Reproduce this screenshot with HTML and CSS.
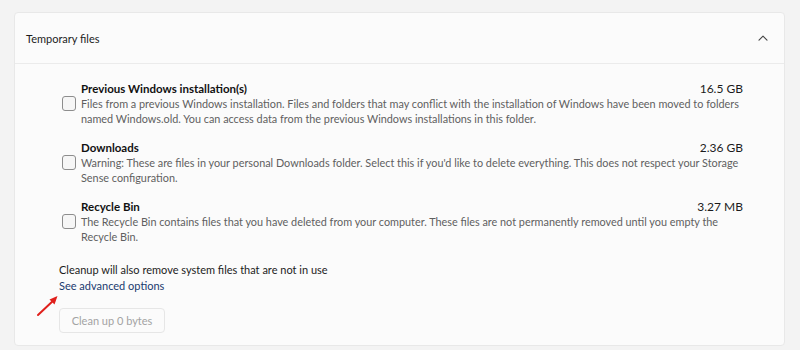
FILE: index.html
```html
<!DOCTYPE html>
<html>
<head>
<meta charset="utf-8">
<link rel="stylesheet" href="styles.css">
</head>
<body>
<div class="page">
  <section class="card">
    <header class="card-head">
      <span class="head-title">Temporary files</span>
      <svg class="chevron" width="10" height="6" viewBox="0 0 10 6"><path d="M1 5.2 L5 1.2 L9 5.2" fill="none" stroke="#444" stroke-width="1.1" stroke-linecap="round" stroke-linejoin="round"/></svg>
    </header>
    <div class="card-body">
      <div class="item">
        <span class="item-title">Previous Windows installation(s)</span>
        <span class="item-size">16.5 GB</span>
        <span class="checkbox"></span>
        <p class="item-desc">Files from a previous Windows installation. Files and folders that may conflict with the installation of Windows have been moved to folders named Windows.old. You can access data from the previous Windows installations in this folder.</p>
      </div>
      <div class="item">
        <span class="item-title">Downloads</span>
        <span class="item-size">2.36 GB</span>
        <span class="checkbox"></span>
        <p class="item-desc">Warning: These are files in your personal Downloads folder. Select this if you'd like to delete everything. This does not respect your Storage Sense configuration.</p>
      </div>
      <div class="item">
        <span class="item-title">Recycle Bin</span>
        <span class="item-size">3.27 MB</span>
        <span class="checkbox"></span>
        <p class="item-desc">The Recycle Bin contains files that you have deleted from your computer. These files are not permanently removed until you empty the Recycle Bin.</p>
      </div>
      <div class="footer">
        <p class="note">Cleanup will also remove system files that are not in use</p>
        <a class="link">See advanced options</a>
        <svg class="arrow" width="26" height="24" viewBox="0 0 26 24"><path d="M3 21 L20 5" stroke="#e0201c" stroke-width="2" stroke-linecap="round"/><path d="M22.5 2 L14.5 5.5 L19.5 10.5 Z" fill="#e0201c"/></svg>
        <button class="btn" disabled>Clean up 0 bytes</button>
      </div>
    </div>
  </section>
</div>
</body>
</html>
```
FILE: styles.css
```css
html, body {
  margin: 0;
  padding: 0;
  background: #f3f3f3;
  font-family: "Lato", "Noto Sans", sans-serif;
  font-size: 11px;
  color: #1b1b1b;
}
.page {
  padding: 12px 15px 0 14px;
}
.card {
  background: #fbfbfb;
  border: 1px solid #e8e8e8;
  border-radius: 4px;
  height: 334px;
  box-sizing: border-box;
}
.card-head {
  height: 50px;
  display: flex;
  align-items: center;
  justify-content: space-between;
  padding: 0 16px 0 11px;
  border-bottom: 1px solid #ebebeb;
}
.head-title {
  font-size: 11px;
  color: #1b1b1b;
}
.chevron {
  display: block;
}
.card-body {
  padding: 17px 41px 0 47px;
}
.item {
  display: grid;
  grid-template-columns: 14px 1fr auto;
  column-gap: 5px;
  line-height: 15px;
  margin-bottom: 14px;
}
.item-title {
  grid-column: 2;
  grid-row: 1;
  font-weight: 700;
  font-size: 11.5px;
  color: #111;
}
.item-size {
  grid-column: 3;
  grid-row: 1;
  text-align: right;
  font-size: 12px;
  color: #1b1b1b;
}
.checkbox {
  grid-column: 1;
  grid-row: 2;
  width: 14px;
  height: 15px;
  box-sizing: border-box;
  border: 1px solid #8d8d8d;
  border-radius: 3px;
  background: #f6f6f6;
}
.item-desc {
  grid-column: 2 / 4;
  grid-row: 2;
  margin: 0;
  font-size: 10.85px;
  color: #5f5f5f;
}
.footer {
  position: relative;
  margin-left: -3px;
  padding-top: 4px;
  line-height: 16px;
}
.note {
  margin: 0;
  color: #1b1b1b;
}
.link {
  display: inline-block;
  color: #1a3a6e;
  text-decoration: none;
}
.arrow {
  position: absolute;
  left: -24px;
  top: 36px;
}
.btn {
  display: block;
  margin-top: 14px;
  width: 106px;
  height: 25px;
  border: 1px solid #e6e6e6;
  border-radius: 4px;
  background: #fbfbfb;
  color: #a3a3a3;
  font-family: inherit;
  font-size: 11px;
  padding: 0;
}
```
